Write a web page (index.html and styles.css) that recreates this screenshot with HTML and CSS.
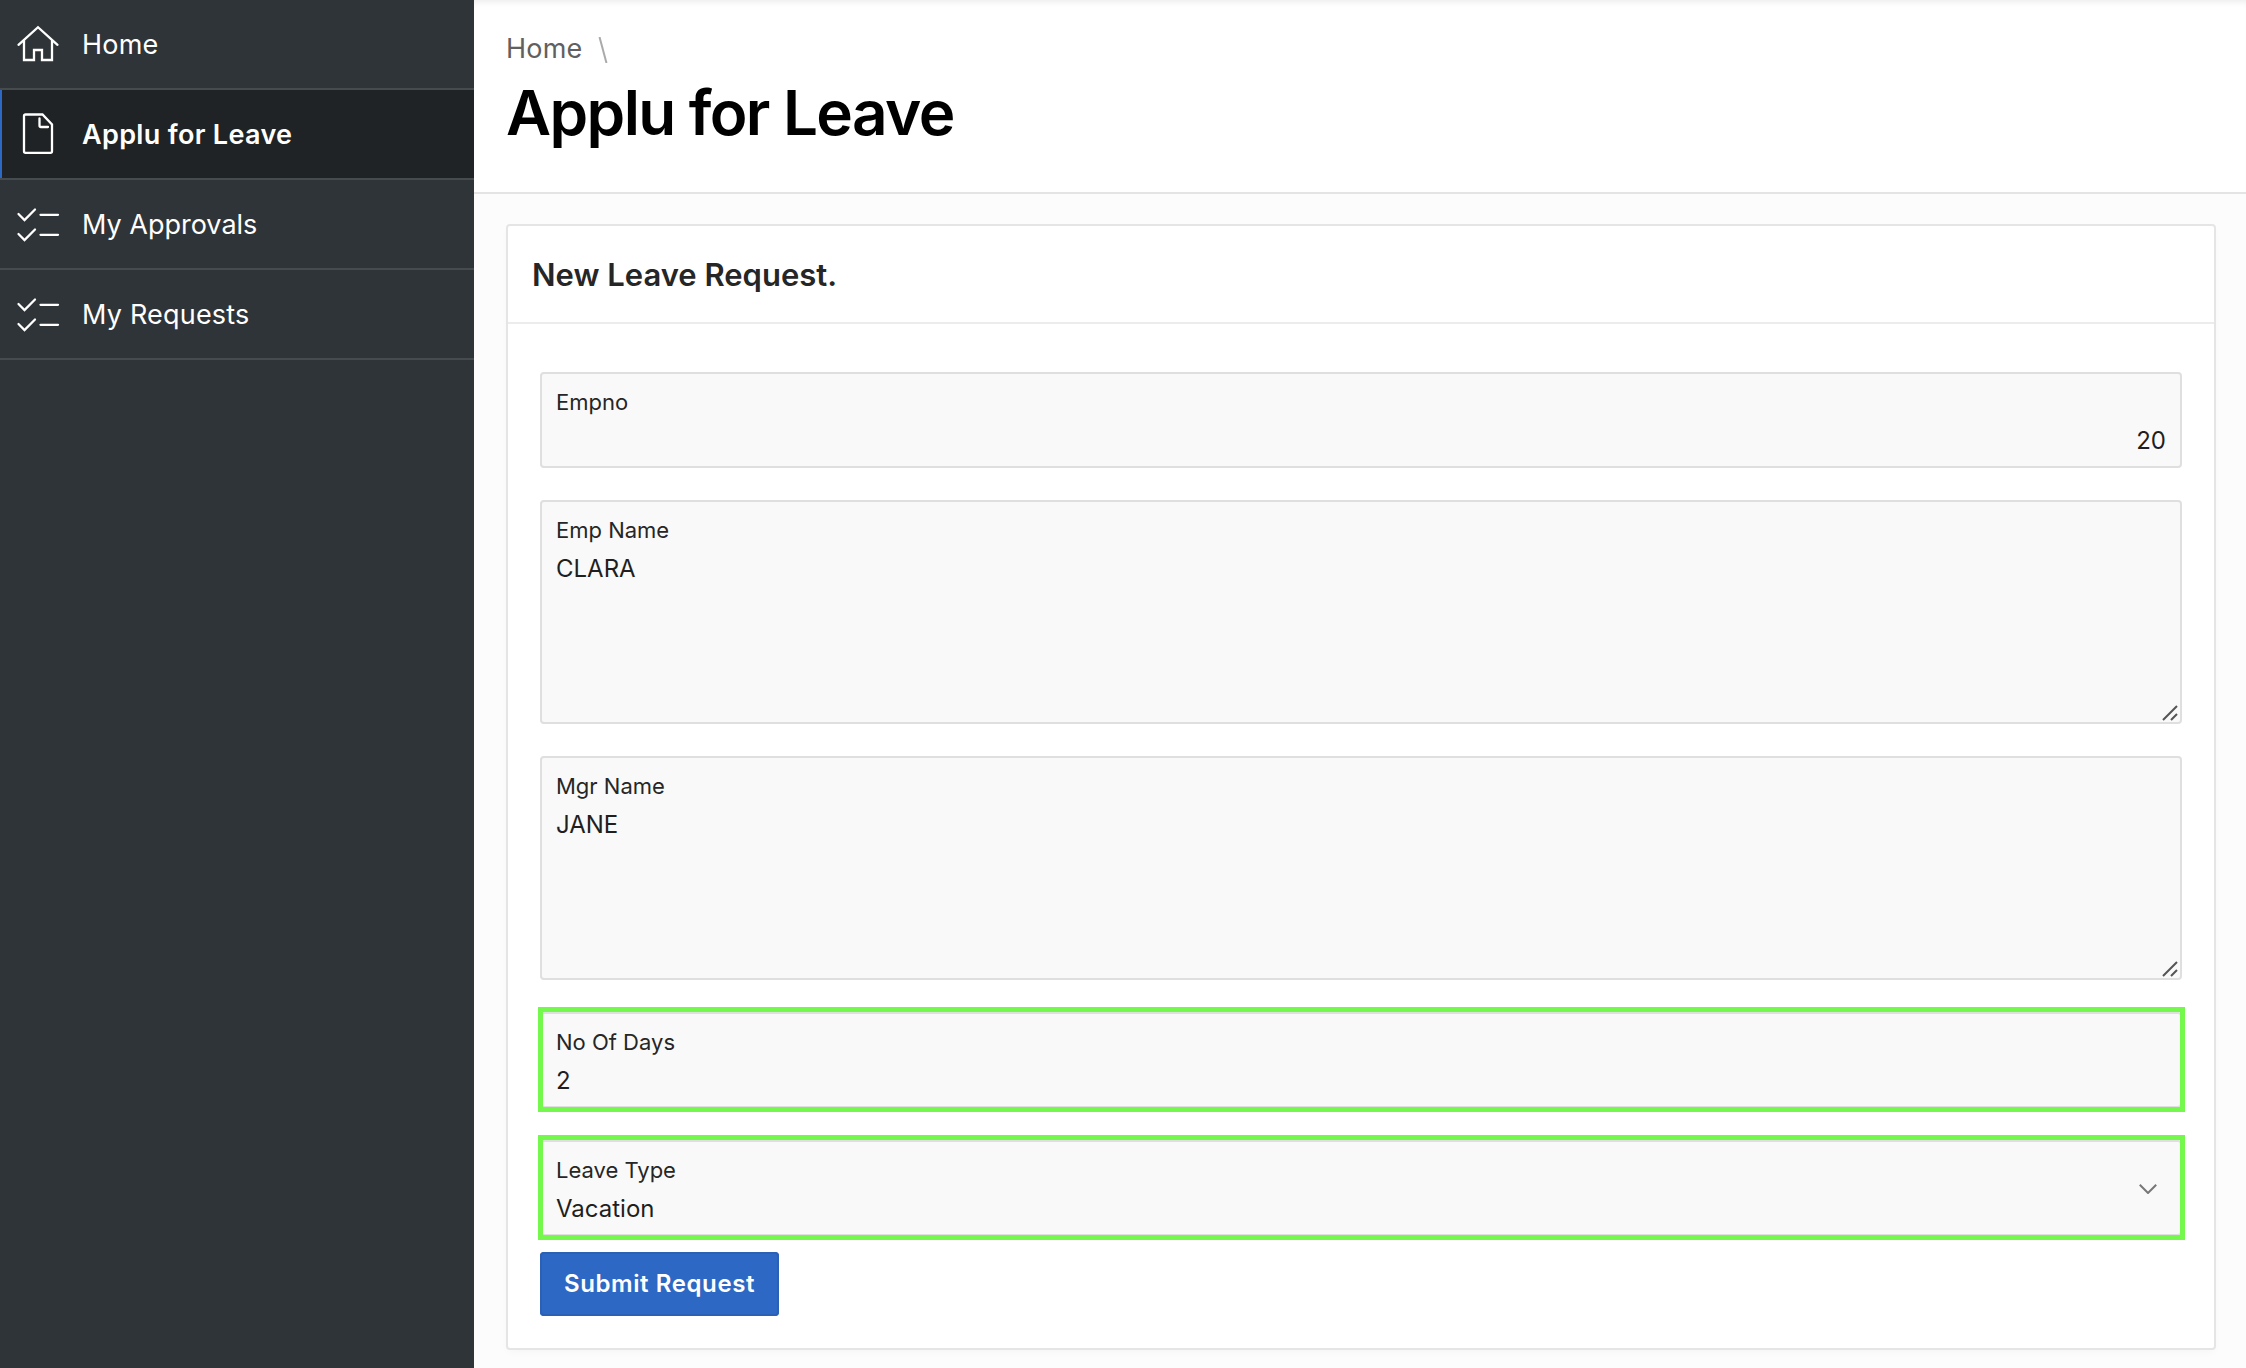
FILE: index.html
```html
<!DOCTYPE html>
<html lang="en">
<head>
<meta charset="utf-8">
<title>Applu for Leave</title>
<link rel="stylesheet" href="styles.css">
</head>
<body>
<div class="app">
  <nav class="sidebar">
    <a class="nav-item"><svg class="nav-icon" viewBox="0 0 44 44"><path d="M2.500 22.800 22 5.200l19.500 17.600M8 18.500V38h10V28h8v10h10V18.500"/></svg><span class="spaced">Home</span></a>
    <a class="nav-item active"><svg class="nav-icon" viewBox="0 0 44 44"><path d="M9.500 2.500H26.500L36 12.500V39.300q0 1.500-1.500 1.500H9.500q-1.500 0-1.500-1.500V4q0-1.500 1.500-1.500M23.500 6.500v7q0 1.500 1.500 1.500h7"/></svg><span>Applu for Leave</span></a>
    <a class="nav-item"><svg class="nav-icon" viewBox="0 0 44 44"><path d="m2.500 12 6 6L19 7.500M24.500 12.800H42M2.500 32l6 6L19 27.500M24.500 32.800H42"/></svg><span>My Approvals</span></a>
    <a class="nav-item"><svg class="nav-icon" viewBox="0 0 44 44"><path d="m2.500 12 6 6L19 7.500M24.500 12.800H42M2.500 32l6 6L19 27.500M24.500 32.800H42"/></svg><span class="spaced">My Requests</span></a>
  </nav>
  <main class="main">
    <header class="page-header">
      <div class="breadcrumb"><span class="spaced">Home</span><svg class="crumb-sep" viewBox="0 0 10 26"><path d="M1.500 0 8.500 26"/></svg></div>
      <h1 class="page-title">Applu for Leave</h1>
    </header>
    <section class="card">
      <h2 class="card-title">New Leave Request.</h2>
      <div class="card-body">
        <div class="field"><div class="label">Empno</div><div class="value number">20</div></div>
        <div class="field area"><div class="label">Emp Name</div><div class="value">CLARA</div><svg class="grip" viewBox="0 0 16 16"><path d="M1 15 15 1M9 15l6-6"/></svg></div>
        <div class="field area"><div class="label">Mgr Name</div><div class="value">JANE</div><svg class="grip" viewBox="0 0 16 16"><path d="M1 15 15 1M9 15l6-6"/></svg></div>
        <div class="field marked"><div class="label">No Of Days</div><div class="value">2</div></div>
        <div class="field marked"><div class="label">Leave Type</div><div class="value">Vacation</div><svg class="chevron" viewBox="0 0 18 10"><path d="m.8.8 8.200 8.200L17.200.8"/></svg></div>
        <button class="submit">Submit Request</button>
      </div>
    </section>
  </main>
</div>
</body>
</html>
```
FILE: styles.css
```css
* { box-sizing: border-box; }
body { margin: 0; font-family: Inter, sans-serif; color: #262626; background: #fcfcfc; }
svg { display: block; fill: none; stroke: currentColor; stroke-width: 2; }
.app { display: flex; height: 1368px; overflow: hidden; }
.sidebar { width: 474px; background: #2f3438; color: #fff; }
.nav-item { display: flex; align-items: center; height: 90px; padding: 0 16px; gap: 22px; border-bottom: 2px solid #464b4d; font-size: 27px; }
.nav-item.active { background: #1f2325; font-weight: 600; letter-spacing: .33px; box-shadow: inset 2px 0 #2d68c4; }
.nav-icon { width: 44px; height: 44px; stroke-width: 2.3; stroke-linecap: round; }
.spaced { letter-spacing: .2px; }
.main { flex: 1; }
.page-header { height: 194px; padding: 28px 32px 0; background: #fff; border-bottom: 2px solid #e4e4e4; box-shadow: inset 0 6px 6px -4px rgba(0,0,0,.08); }
.breadcrumb { display: flex; align-items: center; gap: 16px; height: 40px; font-size: 27px; color: #606060; }
.crumb-sep { width: 10px; height: 26px; color: #aaa; margin-top: 4px; }
.page-title { margin: 5px 0 0; font-size: 62px; line-height: 80px; font-weight: 600; letter-spacing: -1.6px; color: #000; }
.card { margin: 30px 30px 0 32px; background: #fff; border: 2px solid #e5e5e5; border-radius: 4px; box-shadow: 0 4px 8px -2px rgba(0,0,0,.03); }
.card-title { margin: 0; height: 98px; padding-left: 24px; border-bottom: 2px solid #ececec; font-size: 31px; line-height: 97px; font-weight: 600; }
.card-body { padding: 48px 32px 32px; display: flex; flex-direction: column; gap: 32px; }
.field { position: relative; height: 96px; padding: 14px 14px 0; background: #f9f9f9; border: 2px solid #dfdfdf; border-radius: 4px; }
.field.area { height: 224px; }
.label { font-size: 22px; line-height: 28px; }
.value { margin-top: 7px; font-size: 24px; line-height: 36px; color: #1f1f1f; }
.number { text-align: right; }
.grip { position: absolute; right: 2px; bottom: 1px; width: 16px; height: 16px; color: #555; }
.chevron { position: absolute; right: 23px; top: 42px; width: 18px; height: 10px; color: #777; }
.field.marked::after { content: ""; position: absolute; inset: -7px -5px -6px -4px; border: 5px solid #73f84b; }
.submit { align-self: flex-start; width: 239px; height: 64px; margin-top: -16px; padding: 0; border: 0; border-radius: 4px; background: #2d68c4; box-shadow: inset 0 0 0 2px #2a60b5; color: #fff; font: 600 24px/64px Inter, sans-serif; letter-spacing: .59px; }
```
